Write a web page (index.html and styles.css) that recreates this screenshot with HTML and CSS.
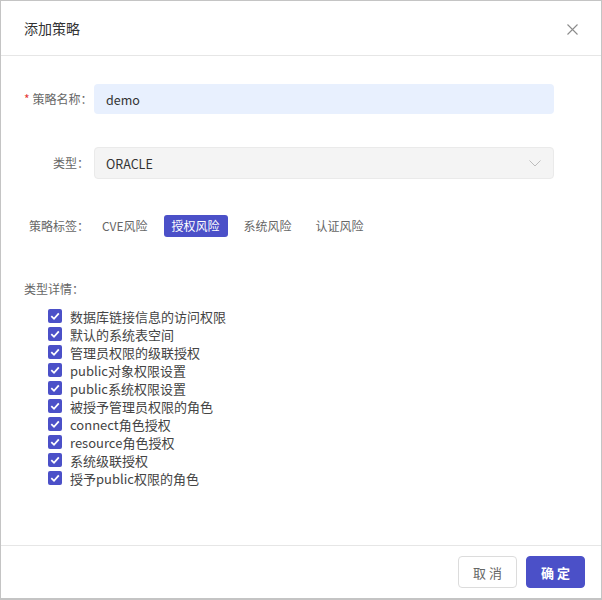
FILE: index.html
```html
<!DOCTYPE html>
<html lang="zh">
<head>
<meta charset="utf-8">
<link rel="stylesheet" href="styles.css">
</head>
<body>
<div class="dialog">
  <div class="header">
    <span class="title">添加策略</span>
    <svg class="close" width="11" height="11" viewBox="0 0 11 11"><path d="M0.5 0.5 L10.5 10.5 M10.5 0.5 L0.5 10.5" stroke="#8c8c8c" stroke-width="1.1" fill="none"/></svg>
  </div>
  <div class="body">
    <div class="row name-row">
      <label class="label"><span class="star">*</span>策略名称：</label>
      <div class="input autofill">demo</div>
    </div>
    <div class="row type-row">
      <label class="label">类型：</label>
      <div class="input select">
        <span>ORACLE</span>
        <svg width="12" height="7" viewBox="0 0 12 7"><polyline points="0.5,0.5 6,6 11.5,0.5" fill="none" stroke="#bdbdbd" stroke-width="1"/></svg>
      </div>
    </div>
    <div class="row tag-row">
      <label class="label">策略标签：</label>
      <div class="tags">
        <span class="tag">CVE风险</span>
        <span class="tag active">授权风险</span>
        <span class="tag">系统风险</span>
        <span class="tag">认证风险</span>
      </div>
    </div>
    <div class="detail-label">类型详情：</div>
    <ul class="checks">
      <li><svg class="cb" width="14" height="14" viewBox="0 0 14 14"><rect width="14" height="14" rx="2" fill="#4b50c8"/><polyline points="3.3,7.2 6,9.8 10.8,4.4" fill="none" stroke="#fff" stroke-width="1.8"/></svg>数据库链接信息的访问权限</li>
      <li><svg class="cb" width="14" height="14" viewBox="0 0 14 14"><rect width="14" height="14" rx="2" fill="#4b50c8"/><polyline points="3.3,7.2 6,9.8 10.8,4.4" fill="none" stroke="#fff" stroke-width="1.8"/></svg>默认的系统表空间</li>
      <li><svg class="cb" width="14" height="14" viewBox="0 0 14 14"><rect width="14" height="14" rx="2" fill="#4b50c8"/><polyline points="3.3,7.2 6,9.8 10.8,4.4" fill="none" stroke="#fff" stroke-width="1.8"/></svg>管理员权限的级联授权</li>
      <li><svg class="cb" width="14" height="14" viewBox="0 0 14 14"><rect width="14" height="14" rx="2" fill="#4b50c8"/><polyline points="3.3,7.2 6,9.8 10.8,4.4" fill="none" stroke="#fff" stroke-width="1.8"/></svg>public对象权限设置</li>
      <li><svg class="cb" width="14" height="14" viewBox="0 0 14 14"><rect width="14" height="14" rx="2" fill="#4b50c8"/><polyline points="3.3,7.2 6,9.8 10.8,4.4" fill="none" stroke="#fff" stroke-width="1.8"/></svg>public系统权限设置</li>
      <li><svg class="cb" width="14" height="14" viewBox="0 0 14 14"><rect width="14" height="14" rx="2" fill="#4b50c8"/><polyline points="3.3,7.2 6,9.8 10.8,4.4" fill="none" stroke="#fff" stroke-width="1.8"/></svg>被授予管理员权限的角色</li>
      <li><svg class="cb" width="14" height="14" viewBox="0 0 14 14"><rect width="14" height="14" rx="2" fill="#4b50c8"/><polyline points="3.3,7.2 6,9.8 10.8,4.4" fill="none" stroke="#fff" stroke-width="1.8"/></svg>connect角色授权</li>
      <li><svg class="cb" width="14" height="14" viewBox="0 0 14 14"><rect width="14" height="14" rx="2" fill="#4b50c8"/><polyline points="3.3,7.2 6,9.8 10.8,4.4" fill="none" stroke="#fff" stroke-width="1.8"/></svg>resource角色授权</li>
      <li><svg class="cb" width="14" height="14" viewBox="0 0 14 14"><rect width="14" height="14" rx="2" fill="#4b50c8"/><polyline points="3.3,7.2 6,9.8 10.8,4.4" fill="none" stroke="#fff" stroke-width="1.8"/></svg>系统级联授权</li>
      <li><svg class="cb" width="14" height="14" viewBox="0 0 14 14"><rect width="14" height="14" rx="2" fill="#4b50c8"/><polyline points="3.3,7.2 6,9.8 10.8,4.4" fill="none" stroke="#fff" stroke-width="1.8"/></svg>授予public权限的角色</li>
    </ul>
  </div>
  <div class="footer">
    <button class="btn cancel">取 消</button>
    <button class="btn ok">确 定</button>
  </div>
</div>
</body>
</html>
```
FILE: styles.css
```css
* { box-sizing: border-box; }
html, body { margin: 0; padding: 0; background: #fff; }
body {
  font-family: "Noto Sans CJK SC", "Noto Sans", sans-serif;
  color: #333;
}
.dialog {
  width: 602px;
  height: 600px;
  border: 1px solid #c4c4c4;
  border-bottom-width: 2px;
  display: flex;
  flex-direction: column;
  background: #fff;
}
.header {
  height: 55px;
  flex: none;
  border-bottom: 1px solid #e6e6e6;
  display: flex;
  align-items: center;
  justify-content: space-between;
  padding: 0 23px 0 23px;
}
.title { font-size: 14px; line-height: 20px; color: #333; }
.close { display: block; margin-top: 2px; }
.body {
  flex: 1;
  padding: 28px 0 0 23px;
  display: flex;
  flex-direction: column;
}
.row { display: flex; align-items: center; }
.label {
  width: 65px;
  margin-right: 5px;
  text-align: right;
  font-size: 12px;
  line-height: 18px;
  color: #666;
  white-space: nowrap;
}
.star { color: #e53935; margin-right: 3px; }
.input {
  width: 460px;
  height: 30px;
  border-radius: 4px;
  padding: 0 12px;
  font-size: 12.5px;
  display: flex;
  align-items: center;
  color: #333;
}
.autofill { background: #e8f0fe; }
.type-row { margin-top: 33px; }
.select {
  height: 32px;
  background: #f4f4f4;
  border: 1px solid #eaeaea;
  padding: 0 12px 0 11px;
  justify-content: space-between;
}
.select svg { display: block; }
.tag-row { margin-top: 36px; }
.tags { display: flex; gap: 8px; }
.tag {
  height: 22px;
  padding: 0 8px;
  border-radius: 3px;
  font-size: 12px;
  line-height: 22px;
  color: #666;
}
.tag.active { background: #4b50c8; color: #fff; }
.detail-label {
  margin-top: 43px;
  font-size: 12px;
  line-height: 18px;
  color: #666;
}
.checks {
  list-style: none;
  margin: 9px 0 0 0;
  padding: 0 0 0 24px;
}
.checks li {
  height: 18px;
  display: flex;
  align-items: center;
  font-size: 13px;
  color: #444;
}
.cb { display: block; margin-right: 8px; flex: none; }
.footer {
  flex: none;
  height: 53px;
  border-top: 1px solid #e6e6e6;
  display: flex;
  justify-content: flex-end;
  align-items: flex-start;
  gap: 9px;
  padding: 10px 16px 0 0;
}
.btn {
  width: 59px;
  height: 32px;
  border-radius: 4px;
  font-family: inherit;
  font-size: 13px;
  cursor: pointer;
}
.cancel { background: #fff; border: 1px solid #dcdcdc; color: #666; }
.ok { background: #4b50c8; border: 1px solid #4b50c8; color: #fff; font-weight: bold; }
```
